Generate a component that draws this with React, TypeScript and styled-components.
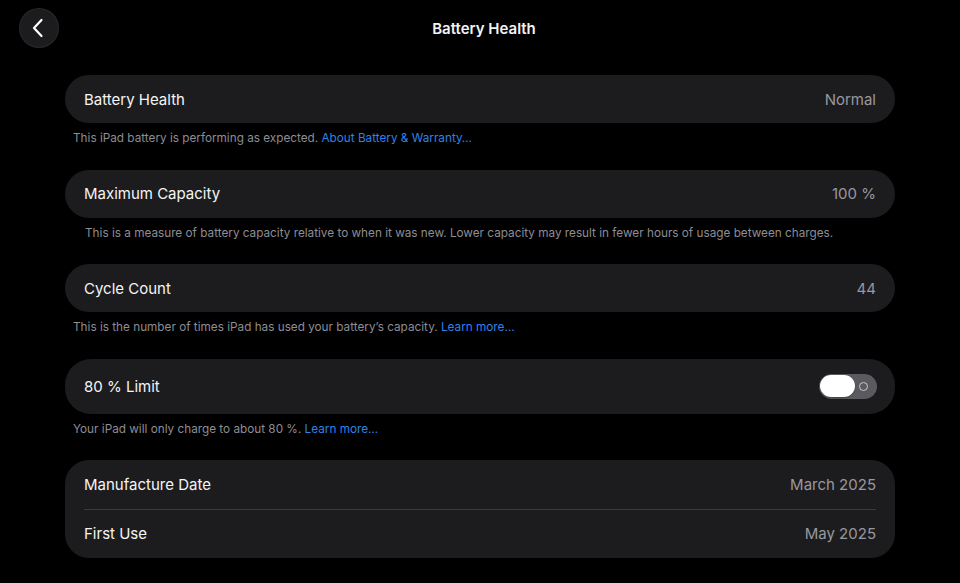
import React from 'react'
import styled, { createGlobalStyle } from 'styled-components'

const GlobalStyle = createGlobalStyle`
  html, body {
    margin: 0;
    padding: 0;
    background: #000;
  }
  body {
    font-family: Inter, "Noto Sans", "Liberation Sans", sans-serif;
    -webkit-font-smoothing: antialiased;
  }
`

const Screen = styled.div`
  width: 960px;
  height: 583px;
  overflow: hidden;
  background: #000;
  color: #fff;
`
const NavBar = styled.header`
  display: flex;
  align-items: center;
  justify-content: center;
  position: relative;
  height: 57px;
`
const BackButton = styled.button`
  position: absolute;
  left: 19px;
  top: 8px;
  display: flex;
  align-items: center;
  justify-content: center;
  width: 40px;
  height: 40px;
  padding: 0 2px 0 0;
  border: none;
  border-radius: 50%;
  background: #1c1c1e;
  box-shadow: inset 0 0 0 1px rgba(255, 255, 255, 0.06);
  cursor: pointer;
`
const Title = styled.h1`
  margin: 0 0 0 8px;
  font-size: 15px;
  font-weight: 600;
  color: #f2f2f2;
`
const List = styled.main`
  display: flex;
  flex-direction: column;
  gap: 23.5px;
  padding: 18px 65px 0;
`
const Group = styled.section`
  display: flex;
  flex-direction: column;
`
const Card = styled.div<{ $tall: boolean }>`
  display: flex;
  flex-direction: column;
  padding: 0 19px;
  border-radius: ${({ $tall }) => ($tall ? '26px' : '24px')};
  background: #1c1c1e;
`
// rows in a multi-row card are a touch taller than a lone row
const CardRow = styled.div<{ $divided: boolean; $height: number }>`
  display: flex;
  align-items: center;
  justify-content: space-between;
  height: ${({ $height }) => $height}px;
  border-top: ${({ $divided }) => ($divided ? '1px solid #3a3a3c' : 'none')};
`
const Label = styled.span`
  font-size: 15px;
  color: #f4f4f5;
`
const Value = styled.span`
  font-size: 15px;
  color: #98989e;
`
const Note = styled.p<{ $indent: boolean }>`
  margin: 7px 0 0;
  padding-left: ${({ $indent }) => ($indent ? '20px' : '8px')};
  font-size: 11.75px;
  line-height: 16px;
  color: #8d8d93;
`
const Link = styled.span`
  color: #2f82ea;
`
const Switch = styled.div`
  position: relative;
  display: flex;
  align-items: center;
  justify-content: flex-end;
  width: 58px;
  height: 25px;
  margin-right: -1px;
  padding-right: 9px;
  box-sizing: border-box;
  border-radius: 13px;
  background: #5b5b5f;
`
const Knob = styled.span`
  position: absolute;
  left: 1px;
  top: 1.5px;
  width: 35px;
  height: 22px;
  border-radius: 11px;
  background: #fff;
  box-shadow: 0 1px 2px rgba(0, 0, 0, 0.3);
`
const OffMark = styled.span`
  width: 7px;
  height: 7px;
  border: 1.3px solid #c8c8cc;
  border-radius: 50%;
`

type Row = { label: string; value?: string; toggle?: boolean }
type Section = { rows: Row[]; note?: React.ReactNode; indentNote?: boolean }

const sections: Section[] = [
  {
    rows: [{ label: 'Battery Health', value: 'Normal' }],
    note: (
      <>
        This iPad battery is performing as expected. <Link>About Battery &amp; Warranty…</Link>
      </>
    ),
  },
  {
    rows: [{ label: 'Maximum Capacity', value: '100 %' }],
    note: 'This is a measure of battery capacity relative to when it was new. Lower capacity may result in fewer hours of usage between charges.',
    indentNote: true,
  },
  {
    rows: [{ label: 'Cycle Count', value: '44' }],
    note: (
      <>
        This is the number of times iPad has used your battery’s capacity. <Link>Learn more…</Link>
      </>
    ),
  },
  {
    rows: [{ label: '80 % Limit', toggle: true }],
    note: (
      <>
        Your iPad will only charge to about 80 %. <Link>Learn more…</Link>
      </>
    ),
  },
  {
    rows: [
      { label: 'Manufacture Date', value: 'March 2025' },
      { label: 'First Use', value: 'May 2025' },
    ],
  },
]

const rowHeight = (row: Row, count: number) => (row.toggle ? 55 : count > 1 ? 48.5 : 48)

export default function App() {
  return (
    <>
      <GlobalStyle />
      <Screen>
        <NavBar>
          <BackButton type="button" aria-label="Back">
            <svg width="12" height="20" viewBox="0 0 12 20" fill="none">
              <path
                d="M9.5 2 L2 10 L9.5 18"
                stroke="#fff"
                strokeWidth="2.2"
                strokeLinecap="round"
                strokeLinejoin="round"
              />
            </svg>
          </BackButton>
          <Title>Battery Health</Title>
        </NavBar>

        <List>
          {sections.map((section, i) => (
            <Group key={i}>
              <Card $tall={section.rows.some((r) => r.toggle)}>
                {section.rows.map((row, j) => (
                  <CardRow
                    key={row.label}
                    $divided={j > 0}
                    $height={rowHeight(row, section.rows.length)}
                  >
                    <Label>{row.label}</Label>
                    {row.toggle ? (
                      <Switch role="switch" aria-checked="false">
                        <Knob />
                        <OffMark />
                      </Switch>
                    ) : (
                      <Value>{row.value}</Value>
                    )}
                  </CardRow>
                ))}
              </Card>
              {section.note && <Note $indent={!!section.indentNote}>{section.note}</Note>}
            </Group>
          ))}
        </List>
      </Screen>
    </>
  )
}
